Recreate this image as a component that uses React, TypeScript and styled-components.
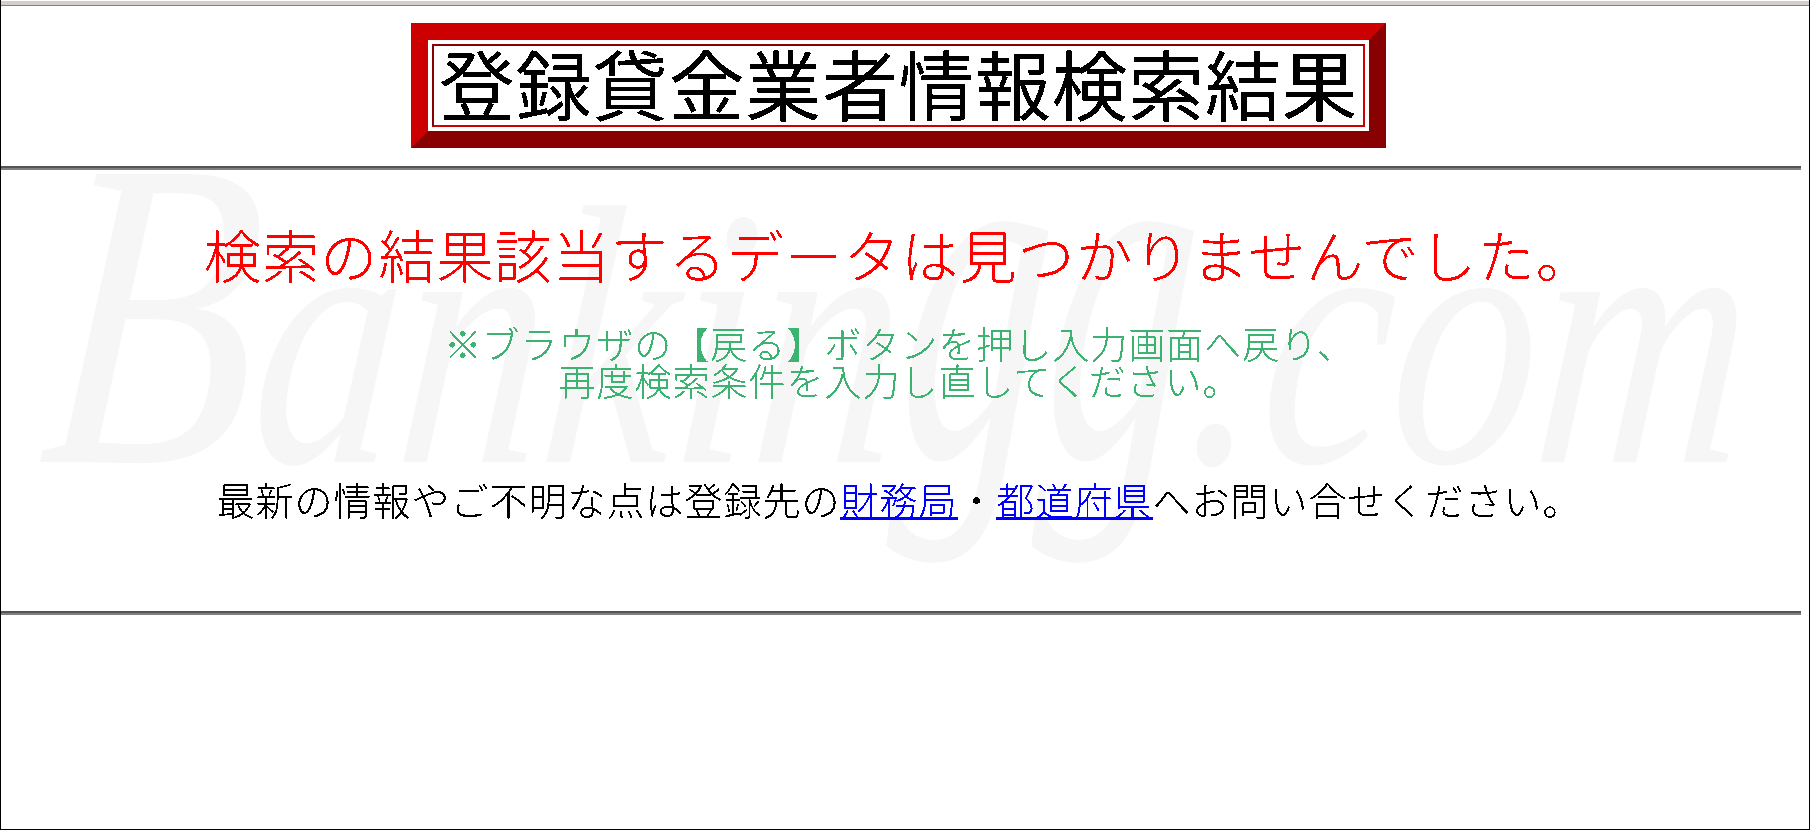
import React from 'react'
import styled, { createGlobalStyle } from 'styled-components'

const jpFont = `"Noto Sans CJK JP", "Noto Sans CJK SC", "Liberation Sans", sans-serif`

const GlobalStyle = createGlobalStyle`
  html, body {
    margin: 0;
    padding: 0;
    background: #ffffff;
  }
`

const Frame = styled.div`
  position: relative;
  box-sizing: border-box;
  width: 1810px;
  height: 830px;
  overflow: hidden;
  background: #ffffff;
  border-left: 1px solid #000000;
  border-right: 1px solid #000000;
  border-bottom: 1px solid #000000;
`

const FilterDefs = styled.svg`
  position: absolute;
  width: 0;
  height: 0;
`

const TopStrip = styled.div`
  height: 5px;
  box-sizing: border-box;
  margin-top: 1px;
  background: #d4d0c8;
  border-bottom: 1px solid #808080;
`

const Watermark = styled.div`
  position: absolute;
  left: 66px;
  top: 94px;
  font-family: "Liberation Serif", serif;
  font-style: italic;
  font-size: 370px;
  line-height: 440px;
  white-space: nowrap;
  color: #f6f6f6;
  transform-origin: left top;
  transform: scaleX(0.785) skewX(-6deg);
  user-select: none;
`

const WatermarkCap = styled.span`
  font-size: 440px;
`

const WatermarkLoops = styled.span`
  display: inline-block;
  transform-origin: 50% 82%;
  transform: scaleY(1.35);
`

const Content = styled.div`
  position: relative;
  width: 1800px;
`

const TitleRow = styled.div`
  display: flex;
  justify-content: center;
  padding: 17px 5px 0 0;
`

const TitleBox = styled.div`
  box-sizing: border-box;
  width: 975px;
  height: 125px;
  padding: 4px;
  background: #ffffff;
  border-style: solid;
  border-width: 17px;
  border-color: #cc0000 #880000 #880000 #cc0000;
`

const TitleCell = styled.div`
  box-sizing: border-box;
  height: 83px;
  border-style: solid;
  border-width: 2px;
  border-color: #880000 #cc0000 #cc0000 #880000;
`

const TitleText = styled.h1`
  margin: 0;
  font-family: ${jpFont};
  font-size: 76px;
  font-weight: 400;
  line-height: 73px;
  letter-spacing: 0.6px;
  text-align: center;
  white-space: nowrap;
  color: #000000;
  filter: url(#crisp);
`

const Rule = styled.hr<{ $top: number }>`
  box-sizing: border-box;
  height: 4px;
  margin: ${({ $top }) => $top}px 0 0;
  border: 0;
  border-top: 2px solid #555555;
  border-bottom: 2px solid #808080;
`

const NoResult = styled.p`
  margin: 52px 4px 0 0;
  font-family: ${jpFont};
  font-size: 57px;
  font-weight: 300;
  line-height: 62px;
  letter-spacing: 1.1px;
  text-align: center;
  white-space: nowrap;
  color: #ff0000;
  filter: url(#crisp);
`

const Hint = styled.p`
  margin: 41px 3px 0 0;
  font-family: ${jpFont};
  font-size: 37px;
  font-weight: 300;
  line-height: 37px;
  letter-spacing: 1px;
  text-align: center;
  white-space: nowrap;
  color: #3cb371;
  filter: url(#crisp);
`

const Contact = styled.p`
  margin: 78px 4px 0 0;
  font-family: ${jpFont};
  font-size: 38px;
  font-weight: 300;
  line-height: 44px;
  letter-spacing: 1px;
  text-align: center;
  white-space: nowrap;
  color: #000000;
  filter: url(#crisp);

  a {
    color: #0000ff;
    text-decoration: underline;
  }
`

const App: React.FC = () => {
  return (
    <>
      <GlobalStyle />
      <Frame>
        <FilterDefs aria-hidden="true">
          <filter id="crisp" colorInterpolationFilters="sRGB">
            <feComponentTransfer>
              <feFuncA type="discrete" tableValues="0 0 1 1 1" />
            </feComponentTransfer>
          </filter>
        </FilterDefs>
        <TopStrip />
        <Watermark aria-hidden="true">
          <WatermarkCap>B</WatermarkCap>ankin<WatermarkLoops>gg</WatermarkLoops>.com
        </Watermark>
        <Content>
          <TitleRow>
            <TitleBox>
              <TitleCell>
                <TitleText>登録貸金業者情報検索結果</TitleText>
              </TitleCell>
            </TitleBox>
          </TitleRow>
          <Rule $top={18} />
          <NoResult>検索の結果該当するデータは見つかりませんでした。</NoResult>
          <Hint>
            ※ブラウザの【戻る】ボタンを押し入力画面へ戻り、
            <br />
            再度検索条件を入力し直してください。
          </Hint>
          <Contact>
            最新の情報やご不明な点は登録先の<a href="#zaimu">財務局</a>・<a href="#todofuken">都道府県</a>へお問い合せください。
          </Contact>
          <Rule $top={90} />
        </Content>
      </Frame>
    </>
  )
}

export default App
